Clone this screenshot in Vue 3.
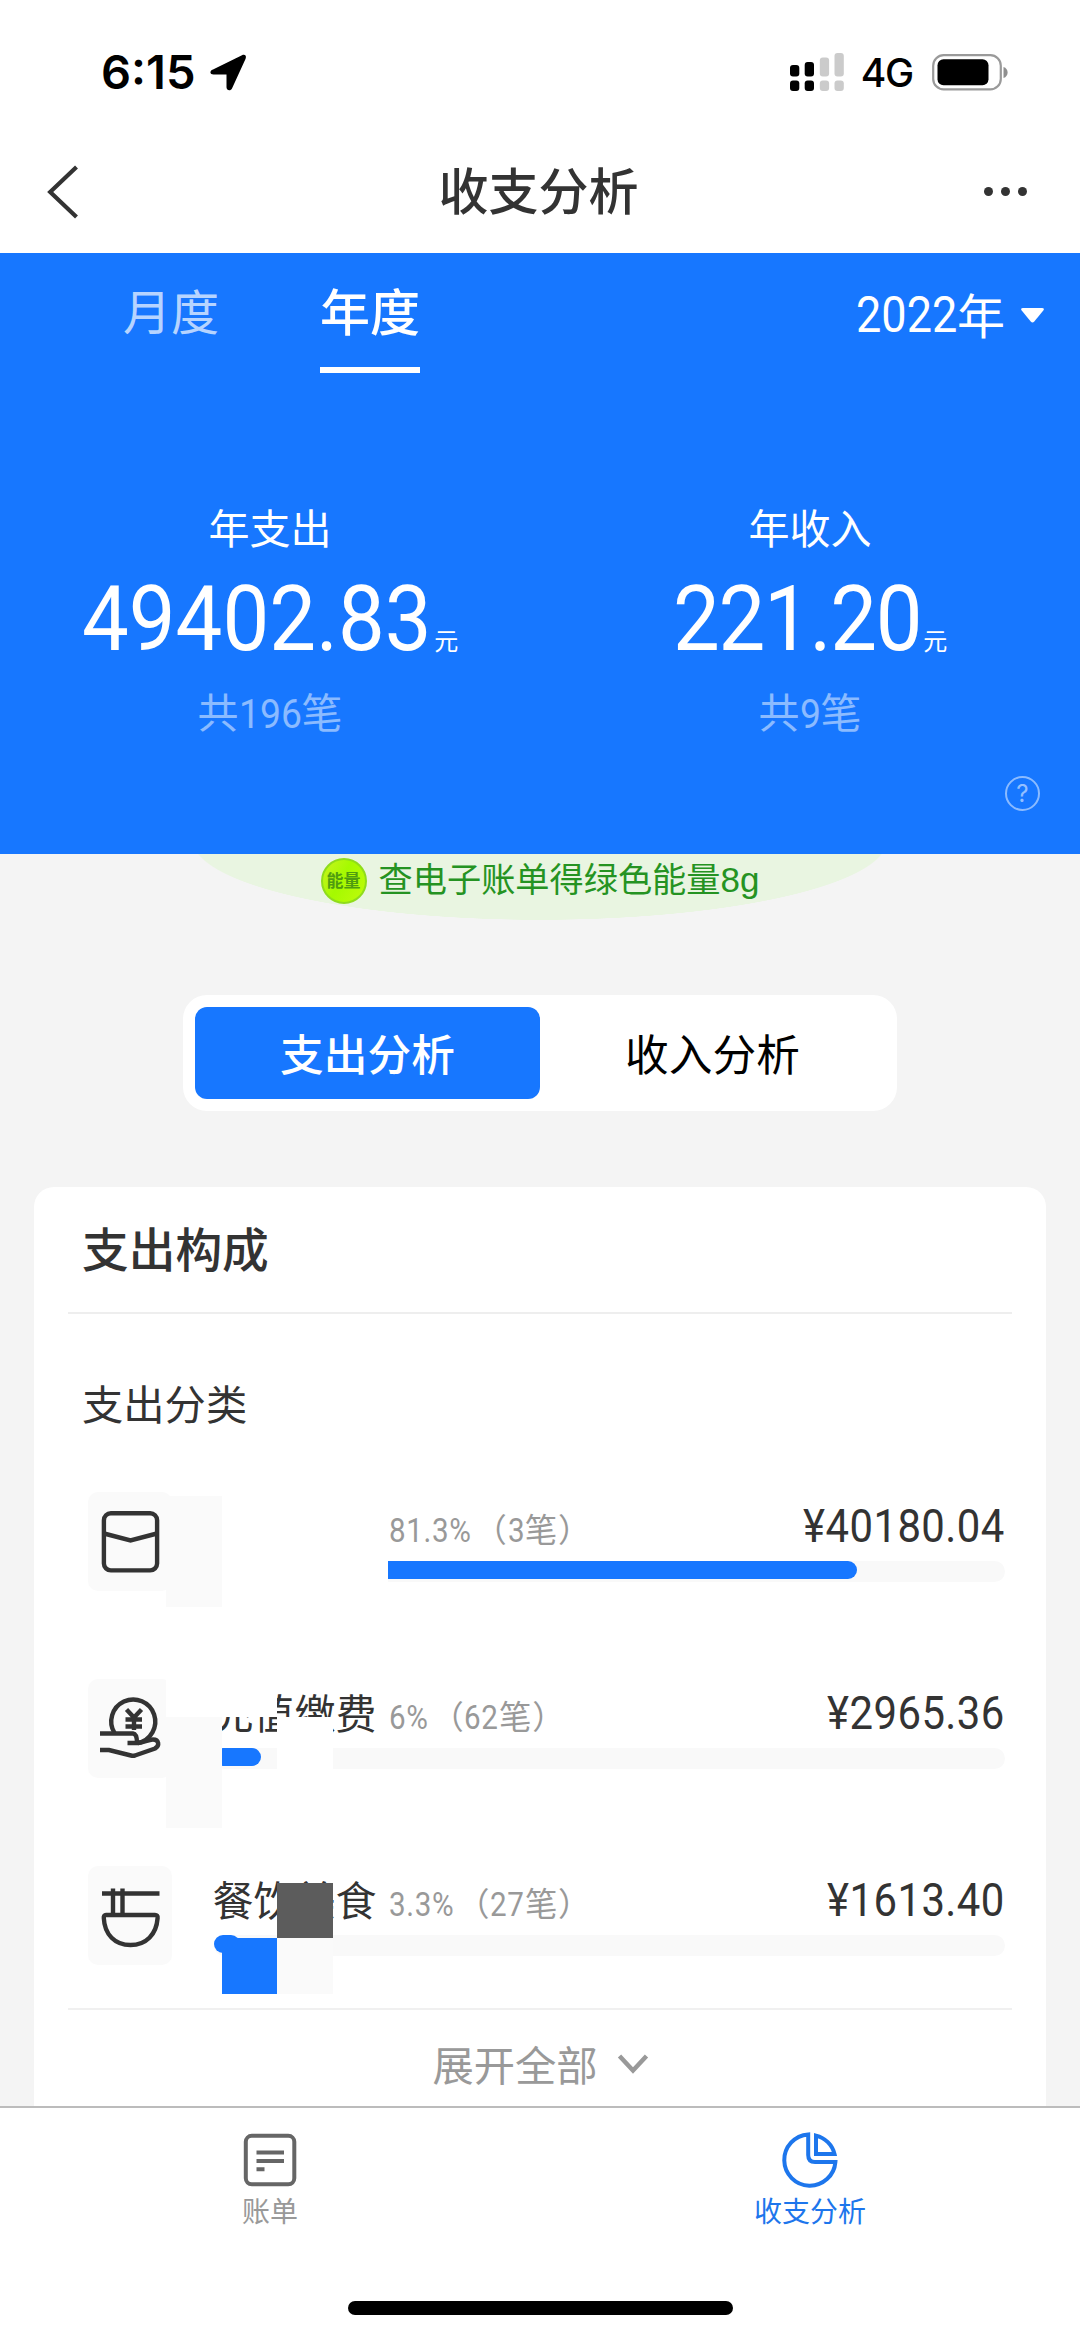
<script setup>
import { h } from 'vue'

const SQUEEZE = 0.91
const EM = { '.': 0.263, '%': 0.733, '¥': 0.525 }

// Narrow figures: the span is squeezed horizontally and its margin gives the freed width back.
const Fig = (props) => {
  const em = [...props.text].reduce((sum, c) => sum + (EM[c] ?? 0.5615), 0)
  return h('span', {
    class: 'fig',
    style: { marginRight: `${(-(1 - SQUEEZE) * em).toFixed(3)}em` },
  }, props.text)
}
Fig.props = ['text']

const totals = [
  { key: 'spent', label: '年支出', amount: '49402.83', count: '196' },
  { key: 'earned', label: '年收入', amount: '221.20', count: '9' },
]

const rows = [
  { key: 'packet', name: '', percent: 81.3, count: '3', amount: '¥40180.04', covers: ['tile-tail high', 'name-blank'] },
  { key: 'recharge', name: '充值缴费', percent: 6, count: '62', amount: '¥2965.36', covers: ['name-top', 'tile-tail', 'name-mid'] },
  { key: 'food', name: '餐饮美食', percent: 3.3, count: '27', amount: '¥1613.40', covers: ['dark', 'blue', 'pale'] },
]
</script>

<template>
  <div class="page">
    <header class="status">
      <div class="clock">
        <span class="time">6:15</span>
        <svg width="37" height="37" viewBox="0 0 37 37"><path d="M3 15.5 32 1.2c2.800-1.300 4.800.6 3.600 3.500L22 34.500c-1.200 2.700-5.500 2.300-5.500-1.200V20.500H3.500c-3.800 0-4.200-3.600-.5-5z" fill="#000" /></svg>
      </div>
      <div class="signals">
        <svg width="54" height="38" viewBox="0 0 54 38">
          <g fill="#000"><rect x="0" y="12" width="9.300" height="11.500" rx="3" /><rect x="0" y="27.500" width="9.300" height="10.500" rx="3" /><rect x="14.700" y="9" width="9.300" height="14.500" rx="3" /><rect x="14.700" y="27.500" width="9.300" height="10.500" rx="3" /></g>
          <g fill="#cbcbcb"><rect x="29.800" y="4.500" width="9.300" height="19" rx="3" /><rect x="29.800" y="27.500" width="9.300" height="10.500" rx="3" /><rect x="44.500" y="0" width="9.300" height="23.500" rx="3" /><rect x="44.500" y="27.500" width="9.300" height="10.500" rx="3" /></g>
        </svg>
        <span class="net">4G</span>
        <svg width="77" height="37" viewBox="0 0 77 37">
          <rect x="1.200" y="1.200" width="67.600" height="34.200" rx="10.500" fill="none" stroke="#9a9a9a" stroke-width="2.200" />
          <rect x="5.500" y="5.300" width="51" height="26" rx="6" fill="#000" />
          <path d="M71.500 13c5.500 1.500 5.500 9.500 0 11z" fill="#8f8f8f" />
        </svg>
      </div>
    </header>

    <nav class="titlebar">
      <svg width="32" height="54" viewBox="0 0 32 54"><path d="M29.500 2 3.200 27 29.500 52" fill="none" stroke="#333" stroke-width="4.200" /></svg>
      <h1>收支分析</h1>
      <div class="more"><i></i><i></i><i></i></div>
    </nav>

    <section class="hero">
      <div class="periods">
        <span class="period">月度</span>
        <span class="period on">年度</span>
        <span class="year"><Fig text="2022" />年<svg width="23" height="15" viewBox="0 0 23 15"><path d="M2 0h19q3 0 1.300 2.500l-9 11q-1.800 2-3.600 0l-9-11Q-1 0 2 0z" fill="#fff" /></svg></span>
      </div>
      <div class="totals">
        <div v-for="t in totals" :key="t.key" class="total" :class="t.key">
          <div class="label">{{ t.label }}</div>
          <div class="sum"><Fig :text="t.amount" /><small>元</small></div>
          <div class="count">共<Fig :text="t.count" />笔</div>
        </div>
      </div>
      <div class="help">?</div>
    </section>

    <main>
      <div class="energy">
        <span class="coin">能量</span>
        <span class="tip">查电子账单得绿色能量<b>8g</b></span>
      </div>

      <div class="segments">
        <span class="segment on">支出分析</span>
        <span class="segment">收入分析</span>
      </div>

      <section class="card">
        <h2>支出构成</h2>
        <h3>支出分类</h3>
        <div v-for="r in rows" :key="r.key" class="row">
          <div class="tile">
            <svg v-if="r.key === 'packet'" width="84" height="98" viewBox="0 0 84 98" fill="none" stroke="#333" stroke-width="4.400">
              <rect x="15.900" y="21.200" width="53.200" height="57.200" rx="7" /><path d="M16 41.500 42.500 48.500 69 41.500" />
            </svg>
            <svg v-else-if="r.key === 'recharge'" width="84" height="98" viewBox="0 0 84 98" fill="none" stroke="#333" stroke-width="4.400">
              <path d="M26.500 54A22 22 0 1 1 50 64" />
              <path d="M38.500 30.500 46 38.500 53.500 30.500M37.500 40.500H54M37.500 47.500H54M46 38.500V51" />
              <path d="M12 54.500H45Q49 55 49 64H39.500M49 64C55 64 60 60.500 65 60.500C71 60.500 72 66.500 67 69.500L47 76.500Q45 77 43 76.500L21 71H12" />
            </svg>
            <svg v-else width="84" height="98" viewBox="0 0 84 98" fill="none" stroke="#333" stroke-width="4.400">
              <path d="M14 27.500H71.500M25 49V22.500M34.500 49V22.500" />
              <path d="M18 49H67Q70 49 69.600 52C68.500 68.500 58 79 42.500 79C27 79 16.500 68.500 15.800 52Q15.500 49 18 49z" />
            </svg>
          </div>
          <div class="body">
            <div class="head">
              <span class="name">{{ r.name }}</span>
              <span class="share"><Fig :text="r.percent + '%'" /><span class="times">（<Fig :text="r.count" />笔）</span></span>
              <span class="amount"><Fig :text="r.amount" /></span>
            </div>
            <div class="track"><div class="fill" :style="{ width: r.percent + '%' }"></div></div>
          </div>
          <i v-for="c in r.covers" :key="c" class="cover" :class="c"></i>
        </div>
        <div class="expand">展开全部<svg width="30" height="22" viewBox="0 0 30 22"><path d="M1.500 2 15 16.500 28.500 2" fill="none" stroke="#999" stroke-width="4.500" /></svg></div>
      </section>
    </main>

    <footer>
      <div class="tabs">
        <div class="tab">
          <svg width="56" height="56" viewBox="0 0 56 56" fill="none" stroke="#666" stroke-width="4">
            <rect x="3.800" y="3.800" width="48.500" height="48.500" rx="6" /><path d="M14.500 20.500H42M14.500 29H42M14.500 37.200H22.500" />
          </svg>
          <span>账单</span>
        </div>
        <div class="tab on">
          <svg width="56" height="56" viewBox="0 0 56 56" fill="none" stroke="#1d76ec" stroke-width="4">
            <path d="M26.200 2.500A25.600 25.600 0 1 0 53.400 30H33Q26.200 30 26.200 23z" />
            <path d="M34 3.600V22H52.500A25 25 0 0 0 34 3.600z" />
          </svg>
          <span>收支分析</span>
        </div>
      </div>
      <div class="home"></div>
    </footer>
  </div>
</template>

<style>
body { margin: 0; }
</style>

<style scoped>
.page {
  width: 1080px;
  height: 2337px;
  display: flex;
  flex-direction: column;
  overflow: hidden;
  background: #fff;
  color: #333;
  font-family: "Noto Sans CJK SC", sans-serif;
}
svg { display: block; flex: none; overflow: visible; }
h1, h2, h3 { margin: 0; font-weight: 500; }
.fig {
  display: inline-block;
  font-family: Roboto, sans-serif;
  transform: scaleX(0.91);
  transform-origin: left;
}

.status {
  height: 144px;
  box-sizing: border-box;
  padding: 0 71px 0 101px;
  display: flex;
  justify-content: space-between;
  align-items: center;
  font-family: Inter, sans-serif;
  color: #000;
}
.clock, .signals { display: flex; align-items: center; }
.clock { gap: 15px; }
.time { font-size: 47px; font-weight: 600; margin-top: -2px; }
.net { font-size: 39px; font-weight: 500; margin: 1px 19px 0 17px; letter-spacing: -1.200px; line-height: 50px; }

.titlebar {
  height: 109px;
  box-sizing: border-box;
  padding: 0 53px 14px 47px;
  display: flex;
  justify-content: space-between;
  align-items: center;
}
.titlebar h1 { font-size: 50px; line-height: 72px; margin: -7px 0 0 14px; }
.more { display: flex; gap: 8px; }
.more i { width: 9px; height: 9px; border-radius: 50%; background: #333; }

.hero {
  height: 600.500px;
  flex: none;
  background: #1777ff;
  color: #fff;
  display: flex;
  flex-direction: column;
}
.periods {
  height: 120px;
  display: flex;
  padding: 0 36px 0 121px;
  font-size: 48px;
  line-height: 112px;
}
.period { width: 100px; text-align: center; color: rgba(255, 255, 255, .7); }
.period + .period { margin-left: 99px; }
.period.on { color: #fff; font-size: 50px; font-weight: 500; height: 114px; border-bottom: 6px solid #fff; }
.year { margin-left: auto; display: flex; align-items: center; font-size: 48px; line-height: 114px; }
.year .fig { font-size: 49.500px; padding-top: 3px; }
.year svg { margin-left: 16px; margin-top: 5px; }
.totals { display: flex; margin-top: 123px; }
.total { width: 540px; display: flex; flex-direction: column; align-items: center; }
.label { font-size: 41px; line-height: 60px; }
.sum { font-size: 91.500px; line-height: 100px; height: 100px; margin-top: 13px; display: flex; align-items: baseline; }
.sum small { font-size: 24px; margin-left: 3px; }
.earned .sum .fig { letter-spacing: -1.400px; }
.count { font-size: 41px; line-height: 60px; margin-top: 11px; color: rgba(255, 255, 255, .5); display: flex; align-items: baseline; }
.help {
  width: 31px;
  height: 31px;
  margin: 32px 40px 0 auto;
  border: 2px solid rgba(255, 255, 255, .5);
  border-radius: 50%;
  color: rgba(255, 255, 255, .55);
  font: 24px/32px Inter, sans-serif;
  text-align: center;
}

main { flex: 1; min-height: 0; overflow: hidden; background: #f4f4f4; display: flex; flex-direction: column; align-items: center; }
.energy {
  width: 696px;
  height: 66px;
  flex: none;
  box-sizing: border-box;
  padding-bottom: 11px;
  background: radial-gradient(348px 80px at 348px -14px, #e9f5e1 99.500%, transparent 100%);
  display: flex;
  justify-content: center;
  align-items: center;
  gap: 12px;
  font-size: 34.200px;
  line-height: 44px;
  color: #259322;
}
.tip { margin-top: -5px; }
.tip b { font-family: "Liberation Sans", sans-serif; font-weight: 400; font-size: 35px; }
.coin {
  width: 42px;
  height: 42px;
  border: 2px solid #8fdc1c;
  border-radius: 50%;
  background: linear-gradient(120deg, #c8f520, #a5fa00 45%, #c0fb0c);
  color: #4f9c10;
  font-size: 17px;
  font-weight: 700;
  line-height: 40px;
  text-align: center;
}
.segments {
  width: 714px;
  height: 116px;
  flex: none;
  box-sizing: border-box;
  margin-top: 75.500px;
  padding: 12px;
  border-radius: 24px;
  background: #fff;
  display: flex;
}
.segment { flex: 1; border-radius: 12px; text-align: center; font-size: 43.700px; line-height: 91px; color: #000; }
.segment.on { background: #1777ff; color: #fff; font-weight: 500; }

.card {
  width: 1012px;
  flex: none;
  box-sizing: border-box;
  height: 930px;
  margin-top: 76px;
  padding: 0 34px;
  border-radius: 20px 20px 0 0;
  background: #fff;
}
h2 { height: 125px; padding-left: 14px; font-size: 46.700px; line-height: 120px; border-bottom: 2px solid #eee; }
h3 { height: 178px; padding-left: 14px; font-size: 41.300px; line-height: 176px; font-weight: 400; }
.row { position: relative; display: flex; height: 187px; margin: 0 7px 0 20px; }
.tile { width: 84px; height: 98.500px; border-radius: 10px; background: #fafafa; }
.body { flex: 1; margin-left: 41.500px; }
.head { height: 69px; display: flex; align-items: baseline; line-height: 61px; white-space: nowrap; }
.name { width: 175px; font-size: 41px; text-indent: -1px; }
.name:empty::before { content: "\00a0"; }
.share { color: #999; font-size: 32.500px; letter-spacing: .7px; display: flex; align-items: baseline; }
.times { margin-left: 3px; display: flex; align-items: baseline; }
.amount { margin-left: auto; font-size: 46px; letter-spacing: .5px; }
.track { height: 20.500px; border-radius: 11px; background: #f9f9f9; }
.fill { height: 17.500px; border-radius: 9px; background: #1777ff; }

.cover { position: absolute; width: 55.500px; height: 55.500px; left: 189px; top: 38px; background: #fff; }
.tile-tail { left: 78px; height: 110.500px; background: #fafafa; }
.tile-tail.high { top: 4px; }
.name-blank { left: 134px; top: 4px; width: 166px; height: 110px; }
.name-top { left: 78px; top: 0; width: 111px; height: 38px; }
.dark { top: 17px; background: #5c5c5c; }
.blue { left: 134px; top: 72px; background: #1777ff; }
.pale { top: 72px; background: #fafafa; }

.expand {
  margin-top: -45px;
  height: 96px;
  border-top: 2px solid #f0f0f0;
  display: flex;
  justify-content: center;
  align-items: center;
  gap: 20px;
  padding-top: 12px;
  font-size: 41.300px;
  line-height: 90px;
  color: #999;
  box-sizing: border-box;
}
.expand svg { margin-top: 4px; }

footer { height: 231px; flex: none; box-sizing: border-box; border-top: 2px solid #bcbcbc; background: #fff; display: flex; flex-direction: column; align-items: center; }
.tabs { width: 100%; height: 193px; display: flex; }
.tab { flex: 1; padding-top: 24px; display: flex; flex-direction: column; align-items: center; font-size: 28px; line-height: 40px; color: #999; }
.tab span { margin-top: 2px; }
.tab.on { color: #1d76ec; }
.home { width: 385px; height: 14px; border-radius: 7px; background: #000; }
</style>
